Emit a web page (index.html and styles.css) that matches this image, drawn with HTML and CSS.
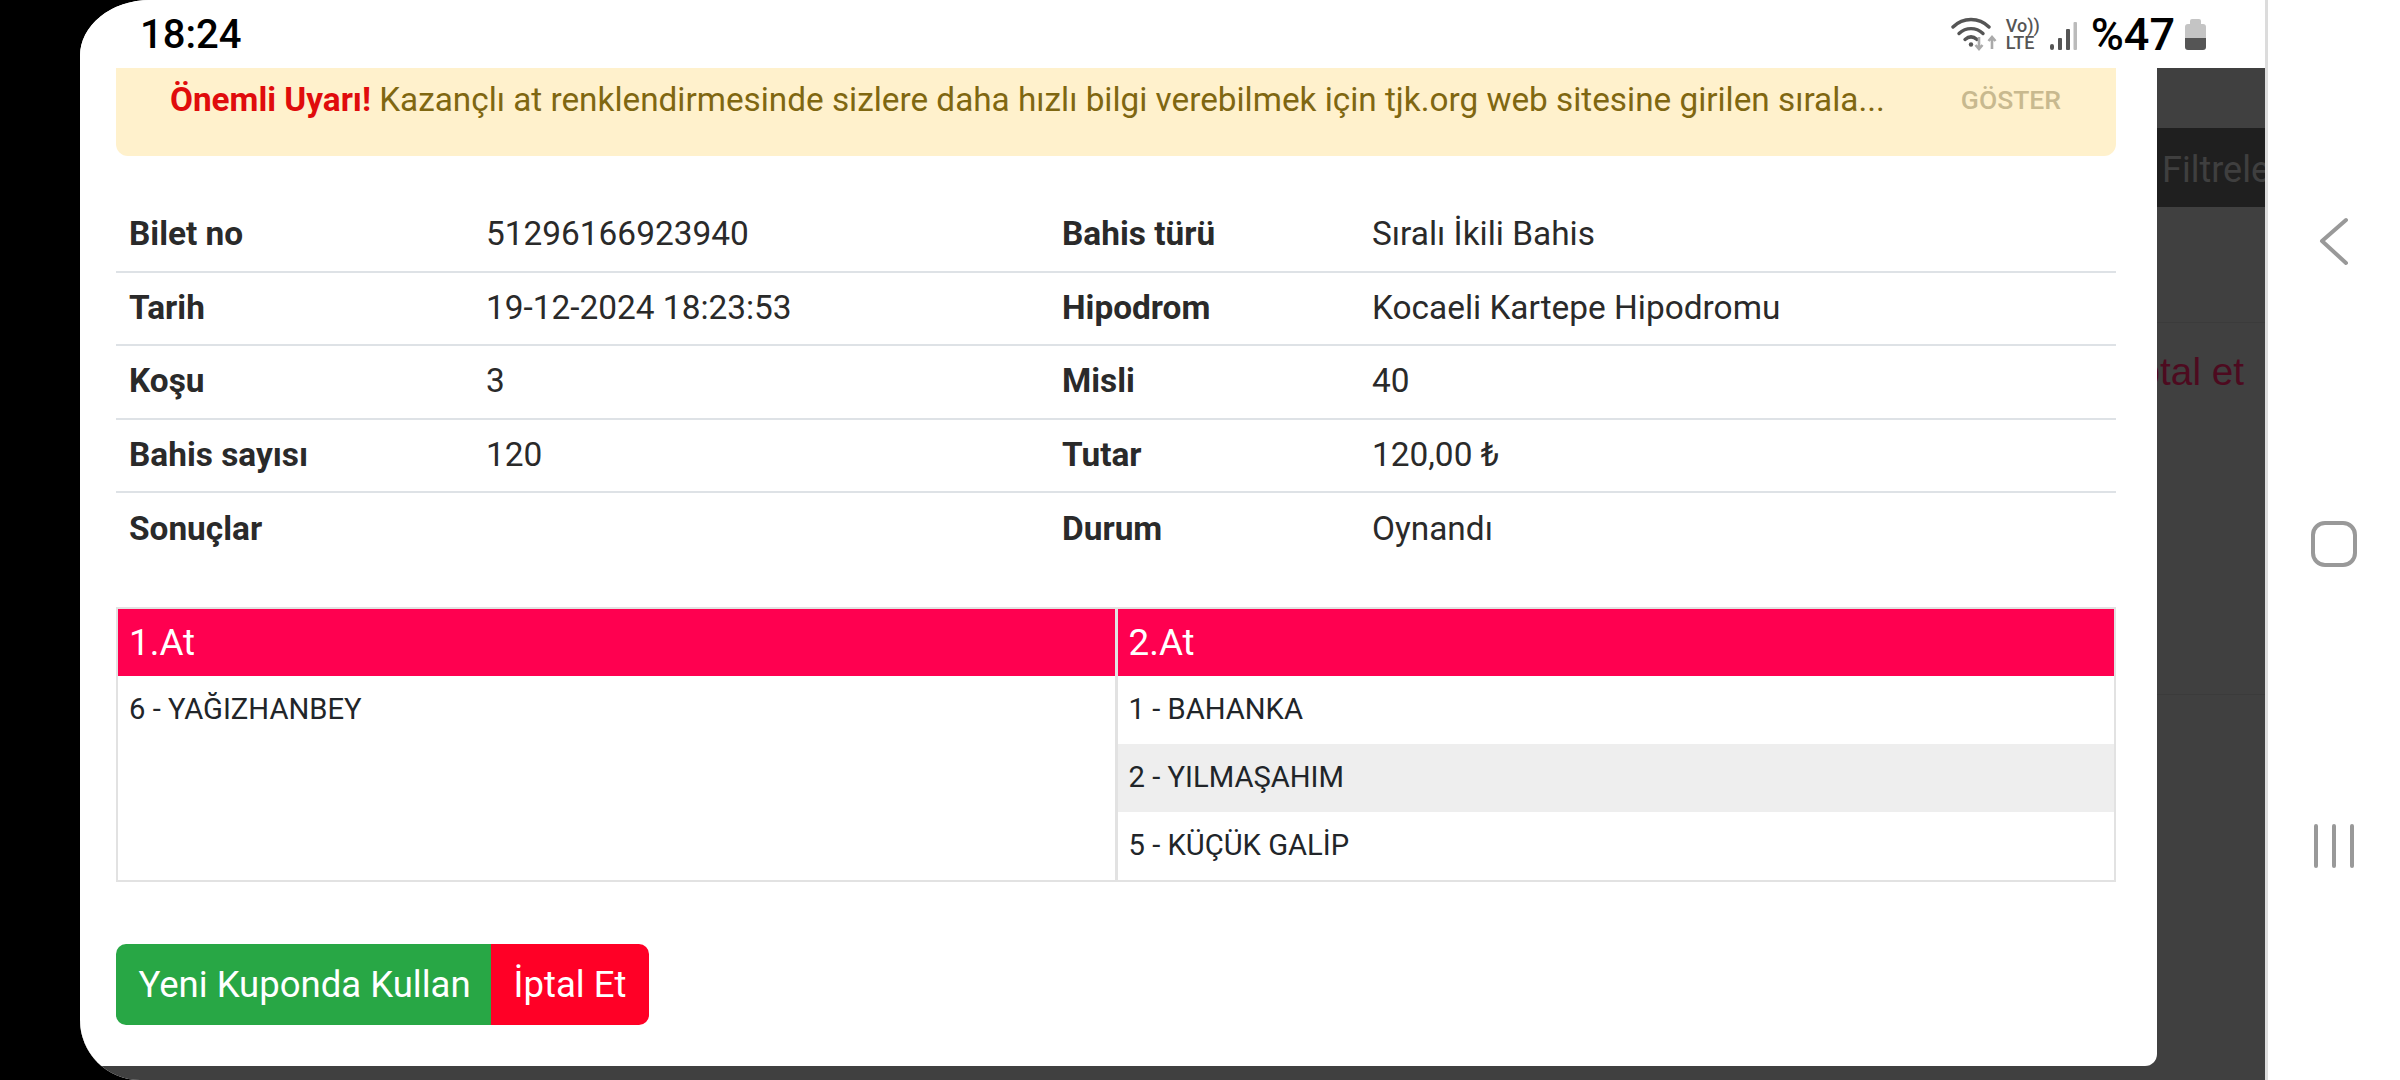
FILE: index.html
```html
<!DOCTYPE html>
<html lang="tr">
<head>
    <meta charset="UTF-8">
    <title>Bilet detayı</title>
    <link rel="stylesheet" href="styles.css">
</head>
<body>
<div class="screen">
    <div class="app">
        <div class="status">
            <span class="time">18:24</span>
            <div class="status-icons">
                <svg class="wifi" width="48" height="34" viewBox="0 0 48 34">
                    <path d="M2 10 C12 0 28 0 38 10" fill="none" stroke="#555" stroke-width="3.4" stroke-linecap="round"/>
                    <path d="M8 16.500 C15 10 25 10 32 16.500" fill="none" stroke="#555" stroke-width="3.400" stroke-linecap="round"/>
                    <path d="M14 22.500 C18 19 22 19 26 22.500" fill="none" stroke="#555" stroke-width="3.400" stroke-linecap="round"/>
                    <circle cx="20" cy="27.500" r="2.200" fill="#555"/>
                    <path d="M28 20 V32 M24.500 28 L28 32 L31.500 28" fill="none" stroke="#aaa" stroke-width="2.600"/>
                    <path d="M41 32 V20 M37.500 24 L41 20 L44.500 24" fill="none" stroke="#aaa" stroke-width="2.600"/>
                </svg>
                <div class="volte">
                    <span>Vo))</span>
                    <span>LTE</span>
                </div>
                <svg class="signal" width="28" height="28" viewBox="0 0 28 28">
                    <rect x="1" y="22" width="4" height="6" rx="2" fill="#555"/>
                    <rect x="9" y="16" width="4" height="12" rx="1" fill="#555"/>
                    <rect x="17" y="7" width="4" height="21" rx="1" fill="#555"/>
                    <rect x="24.500" y="0" width="3.500" height="28" rx="1" fill="#bbb"/>
                </svg>
                <span class="percent">%47</span>
                <svg class="battery" width="21" height="31" viewBox="0 0 21 31">
                    <path d="M5 6 V2 Q5 0 7 0 H14 Q16 0 16 2 V6 Z" fill="#c4c4c4"/>
                    <path d="M0 19 V8 Q0 5 3 5 H18 Q21 5 21 8 V19 Z" fill="#c4c4c4"/>
                    <path d="M0 19 H21 V28 Q21 31 18 31 H3 Q0 31 0 28 Z" fill="#555"/>
                </svg>
            </div>
        </div>
        <div class="content">
            <div class="modal">
                <div class="alert">
                    <p class="alert-text"><b>Önemli Uyarı!</b> Kazançlı at renklendirmesinde sizlere daha hızlı bilgi verebilmek için tjk.org web sitesine girilen sırala...</p>
                    <span class="alert-btn">GÖSTER</span>
                </div>

                <table class="info">
                    <tr>
                        <th class="c1">Bilet no</th><td class="c2">51296166923940</td>
                        <th class="c3">Bahis türü</th><td>Sıralı İkili Bahis</td>
                    </tr>
                    <tr>
                        <th>Tarih</th><td>19-12-2024 18:23:53</td>
                        <th>Hipodrom</th><td>Kocaeli Kartepe Hipodromu</td>
                    </tr>
                    <tr>
                        <th>Koşu</th><td>3</td>
                        <th>Misli</th><td>40</td>
                    </tr>
                    <tr>
                        <th>Bahis sayısı</th><td>120</td>
                        <th>Tutar</th><td>120,00 ₺</td>
                    </tr>
                    <tr>
                        <th>Sonuçlar</th><td></td>
                        <th>Durum</th><td>Oynandı</td>
                    </tr>
                </table>

                <div class="horses">
                    <div class="horse-col">
                        <div class="horse-head">1.At</div>
                        <div class="horse-row">6 - YAĞIZHANBEY</div>
                    </div>
                    <div class="horse-col">
                        <div class="horse-head">2.At</div>
                        <div class="horse-row">1 - BAHANKA</div>
                        <div class="horse-row even">2 - YILMAŞAHIM</div>
                        <div class="horse-row">5 - KÜÇÜK GALİP</div>
                    </div>
                </div>

                <div class="actions">
                    <span class="btn green">Yeni Kuponda Kullan</span>
                    <span class="btn red">İptal Et</span>
                </div>
            </div>
            <div class="backdrop">
                <div class="filter-bar">Filtrele</div>
                <div class="bg-row first"></div>
                <div class="bg-row second"><span>İptal et</span></div>
            </div>
        </div>
    </div>
    <div class="nav">
        <svg width="60" height="60" viewBox="0 0 60 60">
            <path d="M42 8 L18 29 L42 51" fill="none" stroke="#999" stroke-width="4" stroke-linecap="round" stroke-linejoin="round"/>
        </svg>
        <svg width="60" height="60" viewBox="0 0 60 60">
            <rect x="9" y="9" width="42" height="42" rx="12" fill="none" stroke="#999" stroke-width="4"/>
        </svg>
        <svg width="60" height="60" viewBox="0 0 60 60">
            <path d="M12 10 V50 M30 10 V50 M48 10 V50" fill="none" stroke="#999" stroke-width="4" stroke-linecap="round"/>
        </svg>
    </div>
</div>
</body>
</html>
```

FILE: styles.css
```css
* {
    margin: 0;
    padding: 0;
    box-sizing: border-box;
}

body {
    width: 2400px;
    height: 1080px;
    background-color: #000;
    padding-left: 80px;
    overflow: hidden;
    font-family: Roboto, "Liberation Sans", sans-serif;
}

.screen {
    width: 2320px;
    height: 1080px;
    display: flex;
    overflow: hidden;
    border-radius: 70px 0 0 60px / 56px 0 0 60px;
    background-color: #fff;
}

.app {
    width: 2188px;
    height: 1080px;
    display: flex;
    flex-direction: column;
    border-right: 3px solid #dcdcdc;
}

.status {
    height: 68px;
    padding: 0 59px 0 60px;
    display: flex;
    justify-content: space-between;
    align-items: center;
    background-color: #fff;
}

.time {
    font-size: 40px;
    font-weight: 500;
    color: #000;
}

.status-icons {
    display: flex;
    align-items: center;
}

.wifi {
    margin-right: 7px;
}

.volte {
    width: 38px;
    display: flex;
    flex-direction: column;
    font-size: 18px;
    font-weight: 500;
    line-height: 17px;
    color: #555;
}

.signal {
    margin: 4px 0 0 5px;
}

.percent {
    margin: 0 10px 0 14px;
    font-size: 45px;
    font-weight: 500;
    color: #000;
}

.content {
    flex: 1;
    display: flex;
    background-color: #404040;
    overflow: hidden;
}

.modal {
    width: 2077px;
    height: 998px;
    padding: 0 41px 0 36px;
    background-color: #fff;
    border-radius: 0 0 12px 0;
}

.alert {
    height: 88px;
    padding: 0 55px 26px 54px;
    display: flex;
    justify-content: space-between;
    align-items: center;
    background-color: #fff1cc;
    border-radius: 0 0 12px 12px;
    color: #7f6711;
}

.alert-text {
    font-size: 33.300px;
    white-space: nowrap;
}

.alert-text b {
    color: #e00c0c;
    font-weight: 700;
}

.alert-btn {
    font-size: 26.500px;
    font-weight: 500;
    color: #c8b98f;
}

.info {
    width: 2000px;
    margin-top: 42px;
    border-collapse: collapse;
    table-layout: fixed;
    font-size: 33.400px;
    color: #2a2a2a;
}

.info tr {
    height: 73.500px;
}

.info tr + tr {
    border-top: 2px solid #dee2e6;
}

.info th,
.info td {
    padding: 0 13px 2px;
    text-align: left;
}

.info th {
    font-weight: 700;
}

.info td {
    font-weight: 400;
}

.c1 {
    width: 357px;
}

.c2 {
    width: 576px;
}

.c3 {
    width: 310px;
}

.horses {
    width: 2000px;
    height: 275px;
    margin-top: 41px;
    display: flex;
    border: 2px solid #e2e2e2;
}

.horse-col {
    flex: 1;
}

.horse-col + .horse-col {
    border-left: 3px solid #e2e2e2;
}

.horse-head {
    height: 67px;
    padding: 0 11px;
    line-height: 67px;
    font-size: 36.800px;
    color: #fff;
    background-color: #ff0050;
}

.horse-row {
    height: 68px;
    padding: 0 11px;
    line-height: 67px;
    font-size: 29.200px;
    color: #212529;
}

.even {
    background-color: #eee;
}

.actions {
    margin-top: 62px;
    display: flex;
}

.btn {
    height: 81px;
    line-height: 81px;
    font-size: 36.500px;
    color: #fff;
    text-align: center;
}

.green {
    width: 375px;
    padding-left: 2px;
    background-color: #28a745;
    border-radius: 10px 0 0 10px;
}

.red {
    width: 158px;
    background-color: #ff0026;
    border-radius: 0 10px 10px 0;
}

.backdrop {
    flex: 1;
    padding-top: 60px;
    min-width: 0;
    overflow: hidden;
}

.filter-bar {
    height: 79px;
    padding-left: 5px;
    line-height: 84px;
    font-size: 36px;
    color: #3f3f3f;
    background-color: #1f1f1f;
    white-space: nowrap;
}

.bg-row {
    border-bottom: 1px solid #3b3b3b;
}

.first {
    height: 116px;
}

.second {
    height: 372px;
    padding: 27px 21px 0 0;
    display: flex;
    justify-content: flex-end;
    font-family: "Liberation Sans", sans-serif;
    font-size: 38.700px;
    color: #4d0a1f;
    white-space: nowrap;
}

.nav {
    flex: 1;
    padding: 212px 0 204px;
    display: flex;
    flex-direction: column;
    justify-content: space-between;
    align-items: center;
    background-color: #fff;
}
```
